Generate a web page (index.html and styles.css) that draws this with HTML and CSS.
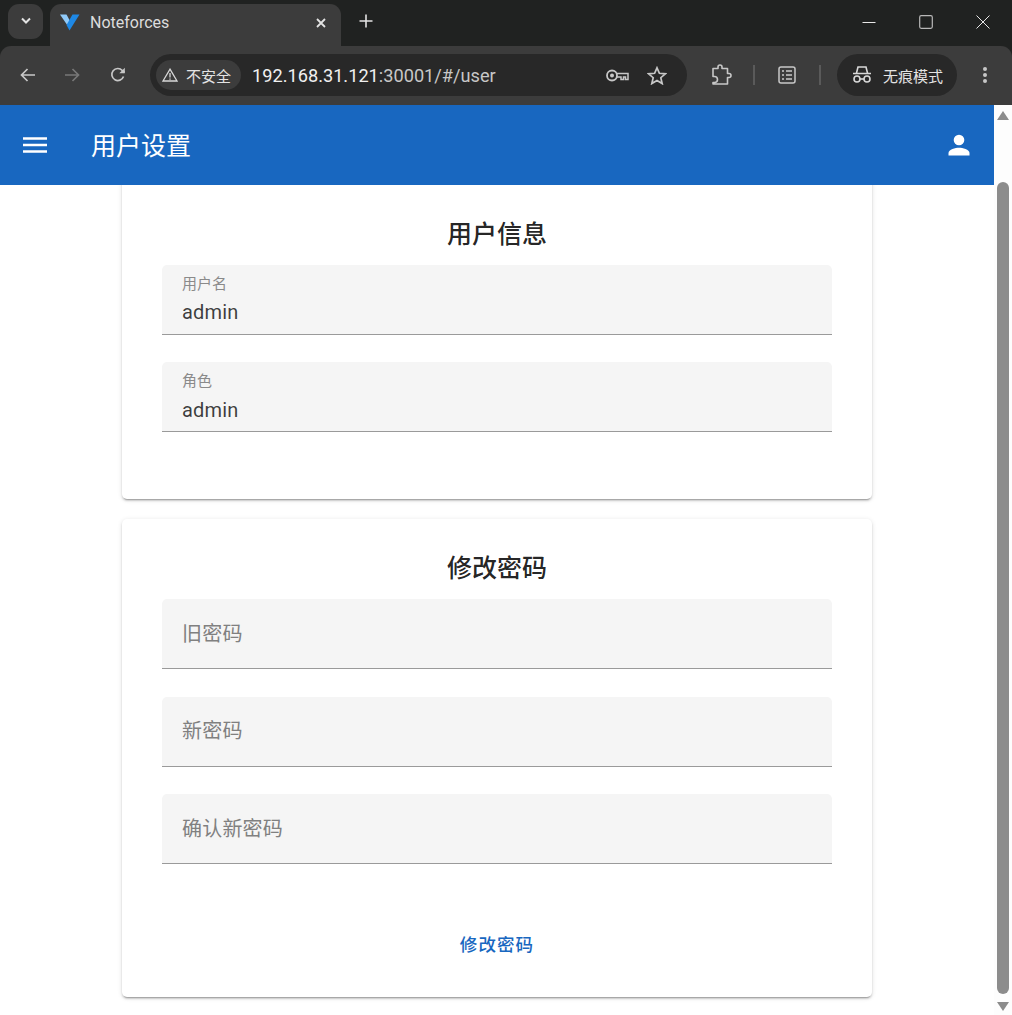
FILE: index.html
```html
<!DOCTYPE html>
<html lang="zh">
<head>
<meta charset="utf-8">
<title>Noteforces</title>
<link rel="stylesheet" href="styles.css">
</head>
<body>
<header class="browser">
  <div class="tabstrip">
    <button class="tab-search" aria-label="tabs"><svg width="12" height="8" viewBox="0 0 12 8"><path d="M2 1.500 6 5.500 10 1.500" fill="none" stroke="#e3e3e3" stroke-width="2"/></svg></button>
    <div class="tab">
      <svg class="favicon" width="20" height="17" viewBox="0 0 20 17"><path d="M0 0.500h6.500l3.500 6.500-2.500 4.500z" fill="#90caf9"/><path d="M19.500 0.500h-7L6.500 11 9.500 16.500z" fill="#1e88e5"/></svg>
      <span class="tab-title">Noteforces</span>
      <svg class="tab-close" width="10" height="10" viewBox="0 0 10 10"><path d="M1 1 9 9M9 1 1 9" stroke="#e3e3e3" stroke-width="1.800"/></svg>
    </div>
    <svg class="newtab" width="14" height="14" viewBox="0 0 14 14"><path d="M7 0.500v13M0.500 7h13" stroke="#e3e3e3" stroke-width="1.600"/></svg>
    <div class="window-controls">
      <svg width="14" height="14" viewBox="0 0 14 14"><path d="M0.500 7.500h13" stroke="#e8e8e8" stroke-width="1"/></svg>
      <svg width="14" height="14" viewBox="0 0 14 14"><rect x="0.700" y="0.700" width="12.600" height="12.600" rx="1.500" fill="none" stroke="#b8b8b8" stroke-width="1.200"/></svg>
      <svg width="14" height="14" viewBox="0 0 14 14"><path d="M0.500 0.500 13.500 13.500M13.500 0.500 0.500 13.500" stroke="#e8e8e8" stroke-width="1"/></svg>
    </div>
  </div>
  <div class="toolbar">
    <svg class="nav-back" width="16" height="14" viewBox="0 0 16 14"><path d="M15 7H2M7.500 1 1.500 7l6 6" fill="none" stroke="#c7c7c7" stroke-width="1.700"/></svg>
    <svg class="nav-forward" width="16" height="14" viewBox="0 0 16 14"><path d="M1 7h13M8.500 1l6 6-6 6" fill="none" stroke="#777" stroke-width="1.700"/></svg>
    <svg class="nav-reload" width="16" height="16" viewBox="0 0 16 16"><path d="M13.500 9.500A6 6 0 1 1 12.300 3.500L14.500 5.500" fill="none" stroke="#c7c7c7" stroke-width="1.700"/><path d="M14.800 0.800v5.500H9.300z" fill="#c7c7c7"/></svg>
    <div class="omnibox">
      <div class="security">
        <svg width="16" height="14" viewBox="0 0 16 14"><path d="M8 1.200 15 13H1z" fill="none" stroke="#d8d8d8" stroke-width="1.300"/><path d="M8 5v4.500M8 10.500v1.300" stroke="#d8d8d8" stroke-width="1.300"/></svg>
        <span>不安全</span>
      </div>
      <div class="url"><span class="url-host">192.168.31.121</span>:30001/#/user</div>
      <svg class="key" width="23" height="13" viewBox="0 0 23 13"><circle cx="6" cy="6.500" r="5" fill="none" stroke="#c7c7c7" stroke-width="1.800"/><circle cx="6" cy="6.500" r="2" fill="#c7c7c7"/><path d="M11 4.500h11v6h-2.500V8h-2v2.500h-2.500V8H11" fill="none" stroke="#c7c7c7" stroke-width="1.500"/></svg>
      <svg class="star" width="20" height="19" viewBox="0 0 20 19"><path d="M10 1.800 12.400 7.300l6 .5-4.600 3.900 1.400 5.900L10 14.500l-5.200 3.100 1.400-5.900L1.600 7.800l6-.5z" fill="none" stroke="#c7c7c7" stroke-width="1.700"/></svg>
    </div>
    <svg class="ext" width="22" height="22" viewBox="0 0 22 22"><path d="M3 4.500h5V3a2 2 0 0 1 4 0v1.500h5.500v5H19a2 2 0 0 1 0 4h-1.500v6.500H3v-1.500h1.500a3 3 0 0 0 0-6H3z" fill="none" stroke="#c7c7c7" stroke-width="1.600" stroke-linejoin="round"/></svg>
    <span class="divider"></span>
    <svg class="reader" width="18" height="18" viewBox="0 0 18 18"><rect x="1" y="1" width="16" height="16" rx="2" fill="none" stroke="#c7c7c7" stroke-width="1.500"/><path d="M4 5h2M8 5h6M4 9h2M8 9h6M4 13h2M8 13h6" stroke="#c7c7c7" stroke-width="1.400"/></svg>
    <span class="divider"></span>
    <div class="incognito">
      <svg width="20" height="18" viewBox="0 0 20 18"><path d="M4.500 7 6 1h8l1.500 6M1 7.500h18" fill="none" stroke="#d8d8d8" stroke-width="1.600"/><circle cx="5" cy="13" r="3" fill="none" stroke="#d8d8d8" stroke-width="1.600"/><circle cx="15" cy="13" r="3" fill="none" stroke="#d8d8d8" stroke-width="1.600"/><path d="M8 13h4" stroke="#d8d8d8" stroke-width="1.600"/></svg>
      <span>无痕模式</span>
    </div>
    <svg class="menu-dots" width="6" height="18" viewBox="0 0 6 18"><circle cx="3" cy="3" r="2" fill="#c7c7c7"/><circle cx="3" cy="9" r="2" fill="#c7c7c7"/><circle cx="3" cy="15" r="2" fill="#c7c7c7"/></svg>
  </div>
</header>
<div class="viewport">
  <div class="app">
    <div class="appbar">
      <svg class="hamburger" width="24" height="16" viewBox="0 0 24 16"><path d="M0 1.500h24M0 8h24M0 14.500h24" stroke="#fff" stroke-width="2.500"/></svg>
      <h1 class="appbar-title">用户设置</h1>
      <svg class="account" width="22" height="22" viewBox="0 0 22 22"><circle cx="11" cy="6" r="5.300" fill="#fff"/><path d="M0.500 21.500v-2.500c0-3.500 7-5.300 10.500-5.300s10.500 1.800 10.500 5.300v2.500z" fill="#fff"/></svg>
    </div>
    <main class="content">
      <section class="card card-info">
        <h2 class="card-title">用户信息</h2>
        <div class="fields">
          <div class="field filled"><label>用户名</label><div class="value">admin</div></div>
          <div class="field filled"><label>角色</label><div class="value">admin</div></div>
        </div>
      </section>
      <section class="card card-password">
        <h2 class="card-title">修改密码</h2>
        <div class="fields">
          <div class="field empty"><span class="placeholder">旧密码</span></div>
          <div class="field empty"><span class="placeholder">新密码</span></div>
          <div class="field empty"><span class="placeholder">确认新密码</span></div>
        </div>
        <div class="actions"><button class="text-btn">修改密码</button></div>
      </section>
    </main>
  </div>
  <aside class="scrollbar">
    <span class="arrow arrow-up"></span>
    <span class="thumb"></span>
    <span class="arrow arrow-down"></span>
  </aside>
</div>
</body>
</html>
```
FILE: styles.css
```css
* { box-sizing: border-box; }
html, body { margin: 0; height: 100%; overflow: hidden; }
body {
  width: 1012px;
  height: 1015px;
  display: flex;
  flex-direction: column;
  background: #fff;
  font-family: Roboto, "Noto Sans CJK SC", sans-serif;
}
svg { display: block; flex: none; }

/* browser chrome */
.browser { height: 105px; flex: none; background: #202221; display: flex; flex-direction: column; }
.tabstrip { height: 46px; flex: none; display: flex; align-items: center; }
.tab-search {
  width: 35px; height: 35px; margin: 0 0 4px 8px; padding: 0; border: 0; border-radius: 11px;
  background: #3c3c3c; display: flex; align-items: center; justify-content: center;
}
.tab {
  width: 291px; height: 42px; margin: 4px 0 0 7px; padding: 0 15px 5px 10px;
  background: #3c3c3c; border-radius: 11px 11px 0 0;
  display: flex; align-items: center;
}
.tab-title { margin-left: 10px; font: 16px Roboto, sans-serif; color: #dcdcdc; flex: 1; }
.newtab { margin: 0 0 4px 18px; }
.window-controls { margin-left: auto; margin-right: 22px; margin-bottom: 3px; display: flex; gap: 43px; }

.toolbar {
  height: 59px; flex: none; background: #3c3c3c; border-radius: 11px 11px 0 0;
  display: flex; align-items: center; padding: 0 0 1px 20px;
}
.nav-forward { margin-left: 28px; }
.nav-reload { margin-left: 30px; }
.omnibox {
  width: 537px; height: 42px; margin-left: 24px; border-radius: 21px; background: #282828;
  display: flex; align-items: center; padding-left: 6px;
}
.security {
  height: 30px; width: 85px; padding-left: 6px; border-radius: 15px; background: #3c3c3c;
  display: flex; align-items: center; gap: 8px; color: #e3e3e3; font-size: 15px; white-space: nowrap;
}
.url { margin-left: 11px; font-size: 18.200px; color: #c7c7c7; white-space: nowrap; width: 343px; }
.url-host { color: #f0f0f0; }
.key { margin-left: 11px; }
.star { margin-left: 18px; }
.ext { margin-left: 23px; }
.divider { width: 2px; height: 20px; background: #5a5a5a; margin-left: 21px; flex: none; }
.reader { margin-left: 23px; }
.divider + .reader + .divider { margin-left: 23px; }
.incognito {
  width: 120px; height: 42px; margin-left: 16px; border-radius: 21px; background: #282828;
  display: flex; align-items: center; padding-left: 15px; gap: 11px; color: #e3e3e3; font-size: 15px; white-space: nowrap;
}
.menu-dots { margin-left: 25px; }

/* page */
.viewport { flex: 1; min-height: 0; display: flex; }
.app { flex: 1; min-width: 0; display: flex; flex-direction: column; }
.appbar {
  height: 80px; flex: none; background: #1867c0; color: #fff;
  display: flex; align-items: center; padding: 0 24px 0 23px; position: relative; z-index: 1;
}
.appbar-title { margin: 2px 0 0 44px; font-size: 25px; font-weight: 400; line-height: 1; }
.account { margin-left: auto; margin-bottom: 1px; }

.content {
  flex: 1; min-height: 0; overflow: hidden;
  display: flex; flex-direction: column; justify-content: flex-end; align-items: center;
  gap: 20px; padding-bottom: 18px;
}
.card {
  width: 750px; flex: none; background: #fff; border-radius: 5px; padding: 0 40px;
  box-shadow: 0 3px 1px -2px rgba(0,0,0,.2), 0 2px 2px 0 rgba(0,0,0,.14), 0 1px 5px 0 rgba(0,0,0,.12);
}
.card-info { height: 340px; padding-top: 55.500px; margin-top: -26px; }
.card-password { height: 478px; padding-top: 30px; }
.card-title {
  margin: 0 0 10px; height: 40px; line-height: 40px; text-align: center;
  font-size: 25px; font-weight: 500; color: rgba(0,0,0,.87);
}
.fields { display: flex; flex-direction: column; gap: 27.500px; }
.field {
  height: 70px; background: #f5f5f5; border-radius: 5px 5px 0 0;
  border-bottom: 1px solid #9a9a9a; padding: 0 20px;
  display: flex; flex-direction: column;
}
.field.filled { justify-content: flex-start; }
.field.empty { justify-content: center; }
.field label { font-size: 15px; line-height: 20px; color: #8a8a8a; margin-top: 9px; }
.value { font-size: 20px; line-height: 24px; margin-top: 6.500px; color: rgba(0,0,0,.76); letter-spacing: .19px; }
.placeholder { font-size: 20px; line-height: 24px; color: #808080; letter-spacing: .19px; }
.actions { margin-top: 63px; display: flex; justify-content: center; }
.text-btn {
  border: 0; background: none; padding: 0; font: 500 17.500px Roboto, "Noto Sans CJK SC", sans-serif;
  letter-spacing: 1.100px; color: #1867c0; line-height: 36px;
}

/* scrollbar */
.scrollbar {
  width: 18px; flex: none; background: #fdfdfd; display: flex; flex-direction: column; align-items: center;
  padding-top: 6px;
}
.arrow { width: 0; height: 0; border-left: 6.500px solid transparent; border-right: 6.500px solid transparent; flex: none; }
.arrow-up { border-bottom: 9px solid #8c8c8c; }
.arrow-down { border-top: 9px solid #8c8c8c; margin-top: 8px; }
.thumb { width: 12px; height: 812px; background: #8c8c8c; border-radius: 6px; margin-top: 62px; flex: none; }
```
